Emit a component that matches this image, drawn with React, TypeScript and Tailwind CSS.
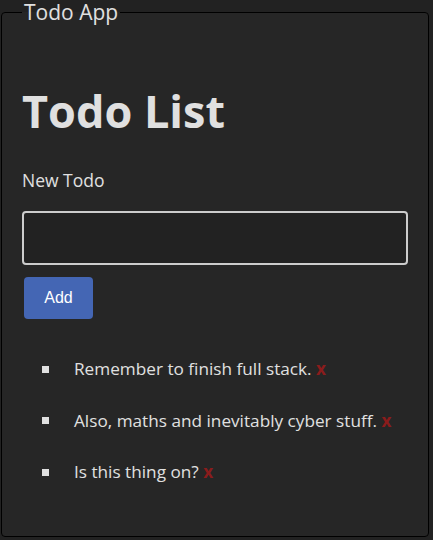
import { useState } from "react";

type Todo = { id: number; text: string };

const initialTodos: Todo[] = [
  { id: 1, text: "Remember to finish full stack." },
  { id: 2, text: "Also, maths and inevitably cyber stuff." },
  { id: 3, text: "Is this thing on?" },
];

export default function App() {
  const [todos, setTodos] = useState<Todo[]>(initialTodos);
  const [draft, setDraft] = useState("");

  const addTodo = () => {
    if (!draft.trim()) return;
    setTodos([...todos, { id: Date.now(), text: draft.trim() }]);
    setDraft("");
  };

  return (
    <div
      className="h-[540px] bg-[#222222] pl-px pr-1 pb-[3px] text-[#e0e0e0]"
      style={{ fontFamily: '"Open Sans", "Noto Sans", sans-serif' }}
    >
      <fieldset className="h-full border border-black rounded bg-[#262626] px-5">
        <legend className="px-0.5 text-[21px] leading-6 text-[#e0e0e0]">
          Todo App
        </legend>
        <h1 className="mt-[59px] text-[45px] font-bold leading-[56px]">
          Todo List
        </h1>
        <label htmlFor="new-todo" className="block mt-[29px] text-[17.5px] leading-6">
          New Todo
        </label>
        <input
          id="new-todo"
          value={draft}
          onChange={(e) => setDraft(e.target.value)}
          className="block mt-[19px] w-full h-[54px] border-2 border-[#cccccc] rounded bg-[#222222] px-2 text-[17.5px] outline-none"
        />
        <button
          onClick={addTodo}
          className="block mt-3 ml-0.5 w-[69px] h-[42px] rounded bg-[#4466b4] text-white text-[16px]"
          style={{ fontFamily: '"Liberation Sans", Arial, sans-serif' }}
        >
          Add
        </button>
        <ul className="mt-[38px] flex flex-col gap-[27.5px]">
          {todos.map((todo) => (
            <li key={todo.id} className="flex items-center text-[17.2px] leading-6">
              <span className="ml-5 mr-[25px] w-[7px] h-[7px] bg-[#e0e0e0]"></span>
              <span>
                {todo.text}{" "}
                <button
                  onClick={() => setTodos(todos.filter((t) => t.id !== todo.id))}
                  className="font-bold text-[#8b1c1c] leading-6"
                >
                  x
                </button>
              </span>
            </li>
          ))}
        </ul>
      </fieldset>
    </div>
  );
}
